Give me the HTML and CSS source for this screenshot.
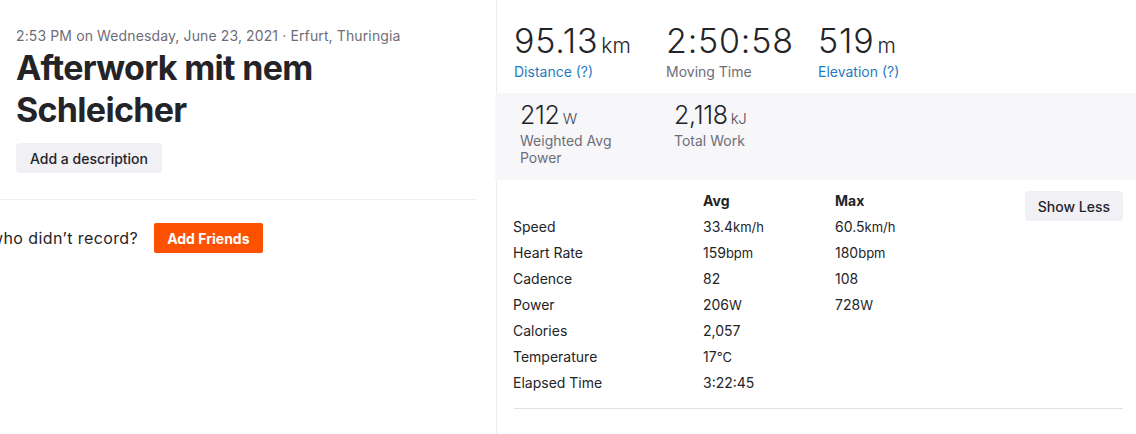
FILE: index.html
```html
<!DOCTYPE html>
<html>
<head>
<meta charset="utf-8">
<link rel="stylesheet" href="styles.css">
</head>
<body>
<div class="page">
  <section class="left">
    <div class="details">
      <div class="meta">2:53 PM on Wednesday, June 23, 2021 · Erfurt, Thuringia</div>
      <h1 class="title">Afterwork mit nem Schleicher</h1>
      <button class="btn-desc">Add a description</button>
    </div>
    <hr class="divider">
    <div class="friends">
      <span class="friends-text">who didn’t record?</span>
      <button class="btn-friends">Add Friends</button>
    </div>
  </section>
  <section class="right">
    <ul class="primary">
      <li class="stat">
        <div class="value">95.13<abbr class="unit">km</abbr></div>
        <div class="label link">Distance (?)</div>
      </li>
      <li class="stat">
        <div class="value">2:50:58</div>
        <div class="label">Moving Time</div>
      </li>
      <li class="stat">
        <div class="value">519<abbr class="unit">m</abbr></div>
        <div class="label link">Elevation (?)</div>
      </li>
    </ul>
    <ul class="secondary">
      <li class="stat2">
        <div class="value2">212<abbr class="unit2">W</abbr></div>
        <div class="label2">Weighted Avg Power</div>
      </li>
      <li class="stat2">
        <div class="value2">2,118<abbr class="unit2">kJ</abbr></div>
        <div class="label2">Total Work</div>
      </li>
    </ul>
    <div class="more">
      <table class="table">
        <thead>
          <tr><th></th><th>Avg</th><th>Max</th></tr>
        </thead>
        <tbody>
          <tr><td>Speed</td><td>33.4<span class="u">km/h</span></td><td>60.5<span class="u">km/h</span></td></tr>
          <tr><td>Heart Rate</td><td>159<span class="u">bpm</span></td><td>180<span class="u">bpm</span></td></tr>
          <tr><td>Cadence</td><td>82</td><td>108</td></tr>
          <tr><td>Power</td><td>206<span class="u">W</span></td><td>728<span class="u">W</span></td></tr>
          <tr><td>Calories</td><td>2,057</td><td></td></tr>
          <tr><td>Temperature</td><td>17<span class="u">℃</span></td><td></td></tr>
          <tr><td>Elapsed Time</td><td>3:22:45</td><td></td></tr>
        </tbody>
      </table>
      <button class="btn-less">Show Less</button>
    </div>
    <hr class="divider2">
  </section>
</div>
</body>
</html>
```

FILE: styles.css
```css
* { box-sizing: border-box; }
html, body { margin: 0; padding: 0; background: #fff; }
body {
  font-family: Inter, "Noto Sans", sans-serif;
  color: #242428;
  width: 1136px;
  height: 434px;
  overflow: hidden;
}
.page { display: flex; height: 434px; }

.left { width: 496px; flex: none; overflow: hidden; }
.details { padding: 27px 16px 0 16px; }
.meta { font-size: 14px; color: #6d6d78; line-height: 18px; letter-spacing: 0.12px; }
.title {
  margin: 2px 0 0 0;
  font-size: 34px;
  font-weight: 700;
  line-height: 42px;
  letter-spacing: -0.7px;
  width: 380px;
  color: #242428;
}
.btn-desc {
  margin-top: 12px;
  height: 30px;
  padding: 0 14px;
  border: none;
  border-radius: 4px;
  background: #f0f0f5;
  font-family: inherit;
  font-size: 14px;
  font-weight: 500;
  color: #242428;
}
.divider { margin: 26px 20px 0 0; border: none; border-top: 1px solid #eeeef0; height: 0; }
.friends { display: flex; align-items: center; gap: 16px; margin: 23px 0 0 -10px; }
.friends-text { font-size: 16px; color: #242428; letter-spacing: 0.4px; }
.btn-friends {
  height: 30px;
  padding: 0 13px;
  border: none;
  border-radius: 2px;
  background: #fc5200;
  color: #fff;
  font-family: inherit;
  font-size: 14px;
  font-weight: 700;
}

.right { flex: 1; border-left: 1px solid #eeeef0; }
.primary { list-style: none; margin: 0; padding: 20px 0 0 17px; display: flex; height: 93px; }
.stat { width: 152px; }
.value {
  font-size: 34px;
  font-weight: 300;
  line-height: 42px;
  letter-spacing: 0.8px;
  color: #242428;
}
.unit { font-size: 21px; line-height: 1; margin-left: 3px; text-decoration: none; letter-spacing: 0; }
.label { font-size: 14px; color: #6d6d78; line-height: 18px; margin-top: 1px; }
.label.link { color: #1f7cc0; }

.secondary {
  list-style: none;
  margin: 0 0 0 -2px;
  padding: 7px 0 0 25px;
  height: 87px;
  display: flex;
  background: #f7f7fa;
}
.stat2 { width: 154px; }
.value2 { font-size: 25px; font-weight: 300; line-height: 30px; letter-spacing: -0.3px; }
.unit2 { font-size: 15px; line-height: 1; margin-left: 3px; text-decoration: none; color: #4a4a54; }
.label2 { font-size: 14px; color: #6d6d78; line-height: 17px; width: 120px; margin-top: 2px; }

.more { display: flex; justify-content: space-between; align-items: flex-start; padding: 11px 13px 0 16px; }
.table { border-collapse: collapse; font-size: 14px; }
.table th { text-align: left; font-weight: 700; height: 23px; padding: 0; line-height: 20px; vertical-align: top; }
.table td { padding: 0; height: 26px; line-height: 26px; }
.table th:nth-child(1), .table td:nth-child(1) { width: 190px; }
.table th:nth-child(2), .table td:nth-child(2) { width: 132px; }
.table th:nth-child(3), .table td:nth-child(3) { width: 120px; }
.u { font-size: 13px; }
.btn-less {
  height: 30px;
  padding: 0 13px;
  border: none;
  border-radius: 4px;
  background: #f0f0f5;
  font-family: inherit;
  font-size: 14px;
  font-weight: 500;
  color: #242428;
}
.divider2 { margin: 12px 13px 0 17px; border: none; border-top: 1px solid #dfdfe8; height: 0; }
```
